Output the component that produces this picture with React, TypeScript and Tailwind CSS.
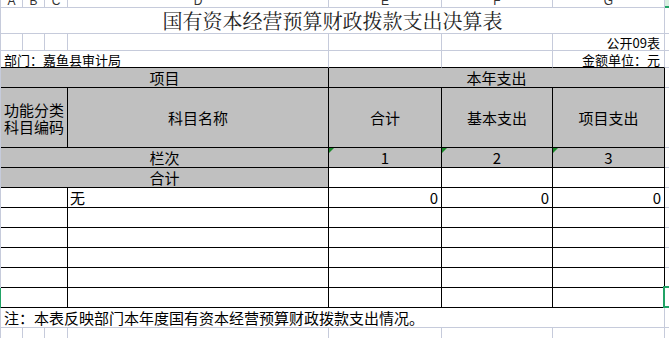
import React from "react";

const L = "border-[#c6cbdb]";

function C({ className = "", children }: { className?: string; children?: React.ReactNode }) {
  return <div className={`box-border min-w-0 ${className}`}>{children}</div>;
}

const Edge = ({ green = false }: { green?: boolean }) => (
  <div className={green ? "bg-[#21a366]" : "bg-[#c6cbdb]"} />
);

const HCell = ({ children }: { children?: React.ReactNode }) => (
  <C className={`relative border-b border-[#c6cbdb] ${""}`}>{children}</C>
);

const gray = "bg-[#c0c0c0]";
const blk = "border-r border-b border-black";

function Tri() {
  return (
    <div className="absolute left-0 top-0 w-0 h-0 border-t-[5px] border-r-[5px] border-t-[#1a8a2a] border-r-transparent" />
  );
}

export default function App() {
  const letters = ["A", "B", "C", "D", "E", "F", "G"];
  const emptyRow = (key: number, last = false) => (
    <React.Fragment key={key}>
      <Edge green={last} />
      <C className={`col-span-3 ${blk}`} />
      <C className={blk} />
      <C className={blk} />
      <C className={blk} />
      <C className={blk} />
      <C className="relative border-b border-[#c6cbdb]">
        {last && (
          <div className="absolute -left-[2px] -top-[2px] -bottom-[1px] right-0 border-2 border-r-0 border-[#21a366] z-10" />
        )}
      </C>
    </React.Fragment>
  );

  return (
    <div className="w-[669px] h-[338px] overflow-hidden bg-white text-black font-['Noto_Sans_CJK_SC',sans-serif]">
      <div className="grid grid-cols-[1px_22px_22px_23px_261px_113px_111px_112px_1fr] grid-rows-[8px_26px_17px_17px_20px_60px_20px_20px_20px_20px_20px_20px_20px_20px_20px_20px]">
        {/* column header strip */}
        <Edge />
        {letters.map((l) => (
          <C key={l} className={`overflow-hidden border-r border-b ${L} bg-white`}>
            <div className="-mt-[5px] text-center text-[12px] leading-[12px] text-[#333] font-['Liberation_Sans',sans-serif]">
              {l}
            </div>
          </C>
        ))}
        <C className="bg-[#d7efe0] border-b-2 border-[#21a366]" />

        {/* title */}
        <Edge />
        <C className={`col-span-7 border-r border-b ${L} flex items-center justify-center`}>
          <span className="text-[20px] leading-none font-['Noto_Serif_CJK_SC','Noto_Sans_CJK_SC',serif] text-[#222]">
            国有资本经营预算财政拨款支出决算表
          </span>
        </C>
        <HCell />

        {/* row 3 */}
        <Edge />
        <C className={`border-r border-b ${L}`} />
        <C className={`border-r border-b ${L}`} />
        <C className={`border-r border-b ${L}`} />
        <C className={`border-r border-b ${L}`} />
        <C className={`border-r border-b ${L}`} />
        <C className={`border-r border-b ${L}`} />
        <C className={`border-r border-b ${L} flex items-center justify-end pr-[4px] text-[13px] leading-none whitespace-nowrap`}>
          公开09表
        </C>
        <HCell />

        {/* row 4 */}
        <Edge />
        <C className={`col-span-4 border-r ${L} border-b border-b-black flex items-center pl-[3px] text-[13px] leading-none whitespace-nowrap`}>
          部门：嘉鱼县审计局
        </C>
        <C className={`border-r ${L} border-b border-b-black`} />
        <C className={`border-r ${L} border-b border-b-black`} />
        <C className={`border-r ${L} border-b border-b-black flex items-center justify-end pr-[4px] text-[13px] leading-none whitespace-nowrap`}>
          金额单位：元
        </C>
        <HCell />

        {/* T1 */}
        <Edge />
        <C className={`col-span-4 ${gray} ${blk} flex items-center justify-center text-[15px] leading-none`}>项目</C>
        <C className={`col-span-3 ${gray} ${blk} flex items-center justify-center text-[15px] leading-none`}>本年支出</C>
        <HCell />

        {/* T2 */}
        <Edge />
        <C className={`col-span-3 ${gray} ${blk} flex flex-col items-center justify-center text-[15px] leading-[17px]`}>
          <span>功能分类</span>
          <span>科目编码</span>
        </C>
        <C className={`${gray} ${blk} flex items-center justify-center text-[15px] leading-none`}>科目名称</C>
        <C className={`${gray} ${blk} flex items-center justify-center text-[15px] leading-none`}>合计</C>
        <C className={`${gray} ${blk} flex items-center justify-center text-[15px] leading-none`}>基本支出</C>
        <C className={`${gray} ${blk} flex items-center justify-center text-[15px] leading-none`}>项目支出</C>
        <HCell />

        {/* T3 栏次 */}
        <Edge />
        <C className={`col-span-4 ${gray} ${blk} flex items-center justify-center text-[15px] leading-none`}>栏次</C>
        {["1", "2", "3"].map((n) => (
          <C key={n} className={`relative ${gray} ${blk} flex items-center justify-center text-[15px] leading-none`}>
            <Tri />
            {n}
          </C>
        ))}
        <HCell />

        {/* T4 合计 */}
        <Edge />
        <C className={`col-span-4 ${gray} ${blk} flex items-center justify-center text-[15px] leading-none`}>合计</C>
        <C className={blk} />
        <C className={blk} />
        <C className={blk} />
        <HCell />

        {/* data row 1 */}
        <Edge />
        <C className={`col-span-3 ${blk}`} />
        <C className={`${blk} flex items-center pl-[2px] text-[15px] leading-none`}>无</C>
        <C className={`${blk} flex items-center justify-end pr-[3px] text-[15px] leading-none`}>0</C>
        <C className={`${blk} flex items-center justify-end pr-[3px] text-[15px] leading-none`}>0</C>
        <C className={`${blk} flex items-center justify-end pr-[3px] text-[15px] leading-none`}>0</C>
        <HCell />

        {emptyRow(2)}
        {emptyRow(3)}
        {emptyRow(4)}
        {emptyRow(5)}
        {emptyRow(6, true)}

        {/* footnote */}
        <Edge />
        <C className={`col-span-7 border-r border-b ${L} flex items-center pl-[3px] text-[15px] leading-none whitespace-nowrap`}>
          注：本表反映部门本年度国有资本经营预算财政拨款支出情况。
        </C>
        <HCell />

        {/* last row */}
        <Edge />
        {letters.map((l) => (
          <C key={"b" + l} className={`border-r border-b ${L}`} />
        ))}
        <HCell />
      </div>
    </div>
  );
}
